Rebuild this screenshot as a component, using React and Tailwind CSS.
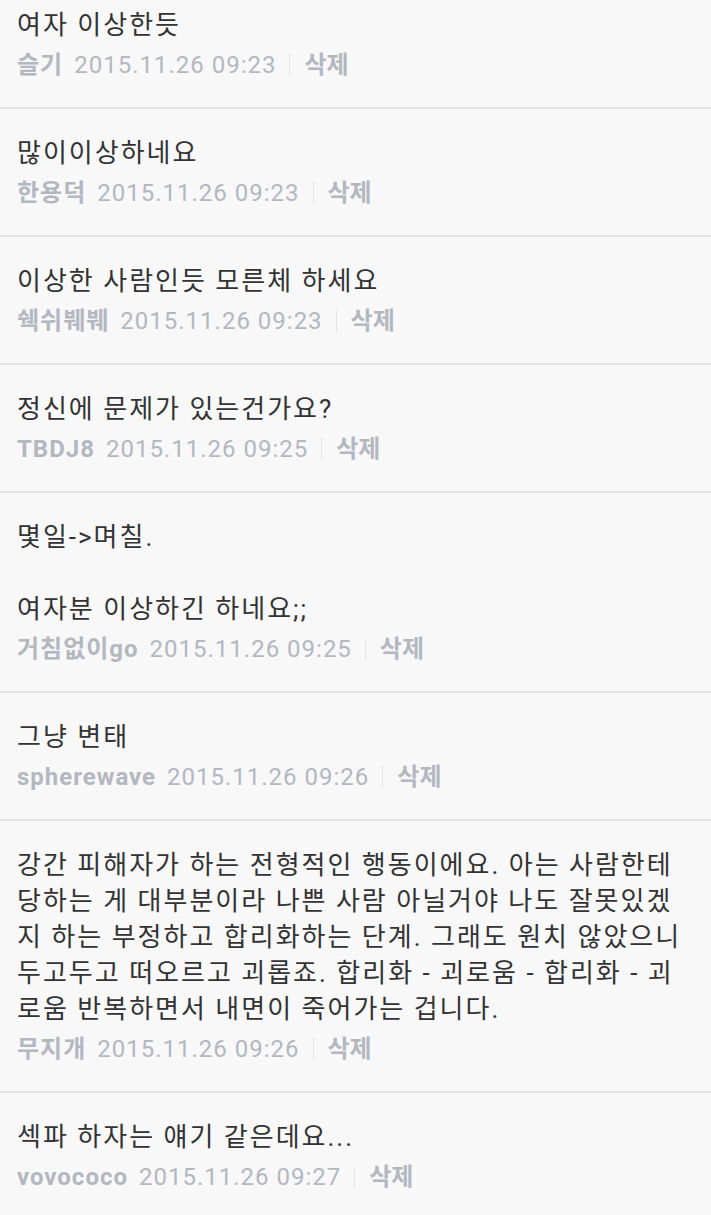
import React from "react";

const comments = [
  { lines: ["여자 이상한듯"], user: "슬기", date: "2015.11.26 09:23" },
  { lines: ["많이이상하네요"], user: "한용덕", date: "2015.11.26 09:23" },
  { lines: ["이상한 사람인듯 모른체 하세요"], user: "쉑쉬붸붸", date: "2015.11.26 09:23" },
  { lines: ["정신에 문제가 있는건가요?"], user: "TBDJ8", date: "2015.11.26 09:25" },
  { lines: ["몇일->며칠.", "", "여자분 이상하긴 하네요;;"], user: "거침없이go", date: "2015.11.26 09:25" },
  { lines: ["그냥 변태"], user: "spherewave", date: "2015.11.26 09:26" },
  {
    lines: [
      "강간 피해자가 하는 전형적인 행동이에요. 아는 사람한테",
      "당하는 게 대부분이라 나쁜 사람 아닐거야 나도 잘못있겠",
      "지 하는 부정하고 합리화하는 단계. 그래도 원치 않았으니",
      "두고두고 떠오르고 괴롭죠. 합리화 - 괴로움 - 합리화 - 괴",
      "로움 반복하면서 내면이 죽어가는 겁니다.",
    ],
    user: "무지개",
    date: "2015.11.26 09:26",
  },
  { lines: ["섹파 하자는 얘기 같은데요..."], user: "vovococo", date: "2015.11.26 09:27" },
];

export default function App() {
  return (
    <div className="w-[711px] h-[1215px] overflow-hidden bg-[#f8f8f9]">
      <div className="mt-[-19px] flex flex-col">
        {comments.map((c, i) => (
          <div key={i} className="border-b-2 border-[#e4e4e6]">
            <div className="pl-[17px] pr-[10px] pt-[26px] pb-[24px]">
              <div className="text-[26px] leading-[36px] tracking-[2px] text-[#333333] font-['Roboto','Noto_Sans_CJK_KR',sans-serif] whitespace-nowrap">
                {c.lines.map((l, j) => (
                  <div key={j} className="h-[36px]">{l}</div>
                ))}
              </div>
              <div className="mt-[4px] h-[36px] flex items-center text-[24px] text-[#b3b7c0] font-['Roboto','Noto_Sans_CJK_KR',sans-serif] whitespace-nowrap">
                <span className="font-bold tracking-[1px]">{c.user}</span>
                <span className="ml-[11px] tracking-[1px]">{c.date}</span>
                <span className="ml-[13px] mr-[14px] w-[1px] h-[22px] bg-[#e2e3e6]" />
                <span className="font-bold">삭제</span>
              </div>
            </div>
          </div>
        ))}
      </div>
    </div>
  );
}
